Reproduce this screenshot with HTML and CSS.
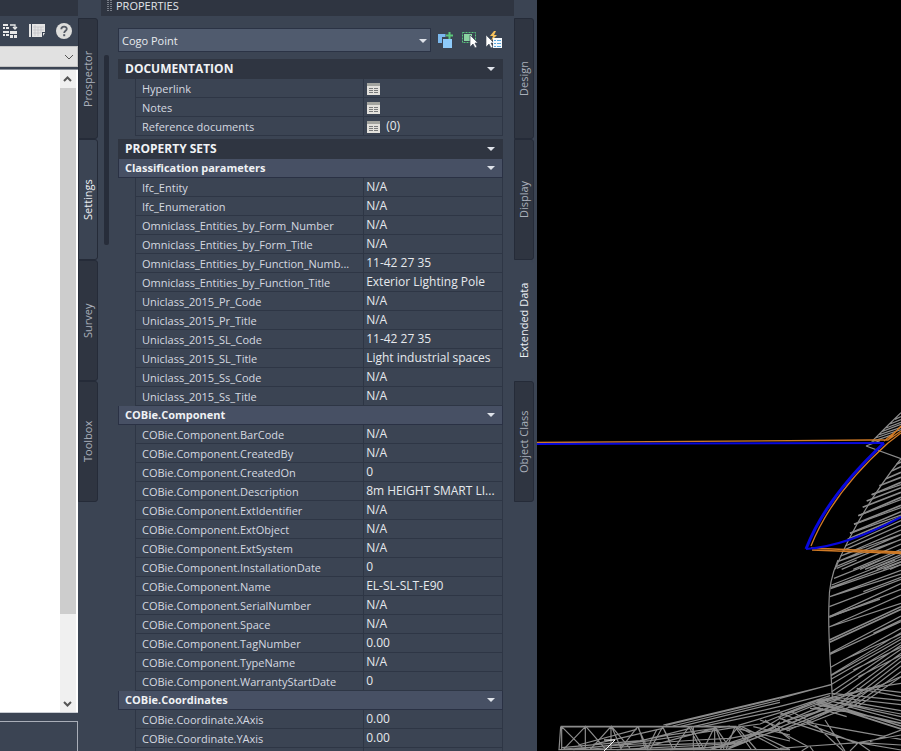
FILE: index.html
```
<!DOCTYPE html>
<html lang="en">
<head>
<meta charset="utf-8">
<title>Properties</title>
<link rel="stylesheet" href="styles.css">
</head>
<body>
<main class="workspace">
  <section class="toolspace" aria-label="Toolspace">
    <div class="titlebar"></div>
    <div class="toolbar">
      <button class="tool" aria-label="Item view"><svg width="16" height="16" viewBox="0 0 16 16"><path fill="#e8e8e8" d="M0 1h5v2H0zM0 4h2v2H0zM3 4h3v2H3zM0 8h6v2H0zM0 11h2v2H0zM3 11h3v2H3zM7 8h7v3H7zM7 12h3v3H7zM11 12h3v3h-3z"/><path d="M7 2h5v4M10 4l2 2 2-2" fill="none" stroke="#e8e8e8" stroke-width="1.3"/></svg></button>
      <button class="tool" aria-label="Panorama"><svg width="18" height="16" viewBox="0 0 18 16"><path fill="#e4e4e4" d="M1 1h2v13H1zM4 1h13v8h-3v5H4zM15 10h2l-2 3z"/><path d="M5 4h11M5 7h11M5 10h8M7 2v11M10 4v9M13 4v6" stroke="#b9bbc0" stroke-width=".6"/></svg></button>
      <button class="tool" aria-label="Help"><svg width="18" height="18" viewBox="0 0 18 18"><circle cx="9" cy="9" r="8" fill="#dededc"/><path d="M6.3 7.2C6.3 3.7 12 3.8 11.8 7c-.1 1.8-2.6 1.9-2.6 4" fill="none" stroke="#555b65" stroke-width="1.8"/><path d="M8.2 12.2h2v2h-2z" fill="#555b65"/></svg></button>
    </div>
    <select class="view-select" aria-label="View"><option></option></select>
    <div class="tree">
      <div class="scrollbar">
        <svg width="15" height="18" viewBox="0 0 15 18"><path d="M4 11l3.500-3.500L11 11" fill="none" stroke="#555" stroke-width="2"/></svg>
        <div class="thumb"></div>
        <svg width="15" height="18" viewBox="0 0 15 18"><path d="M4 8l3.500 3.500L11 8" fill="none" stroke="#555" stroke-width="2"/></svg>
      </div>
    </div>
    <div class="preview"></div>
  </section>
  <nav class="tabs" aria-label="Toolspace tabs">
    <button class="tab">Prospector</button>
    <button class="tab active">Settings</button>
    <button class="tab">Survey</button>
    <button class="tab">Toolbox</button>
  </nav>
  <section class="palette" aria-label="Properties">
    <h1 class="palette-title"><svg width="5" height="12" viewBox="0 0 5 12"><path d="M1 0v12M4 0v12" stroke="#c3c7cf" stroke-dasharray="1 1"/></svg>PROPERTIES</h1>
    <div class="palette-body">
      <div class="palette-scroll"></div>
      <div class="palette-content">
        <div class="object-row">
          <span class="select-wrap">
            <select class="object-select" aria-label="Object type"><option>Cogo Point</option></select>
            <svg class="caret" width="10" height="6" viewBox="0 0 10 6"><path d="M1 1h8L5 5z" fill="#dfe3ea"/></svg>
          </span>
          <button class="tool" aria-label="Add to selection"><svg width="18" height="18" viewBox="0 0 18 18"><path fill="#7ab8ee" d="M1 3h8v3H5v6H1z"/><path fill="#8ecbfa" d="M6 8h9v9H6z"/><path d="M12.500 0v8M8.500 4h8" stroke="#3b4453" stroke-width="4"/><path d="M12.500 1v7M9 4.500h7" stroke="#5bc57a" stroke-width="2"/></svg></button>
          <button class="tool" aria-label="Select objects"><svg width="18" height="18" viewBox="0 0 18 18"><path d="M1.500 1.500h13v10h-13z" fill="none" stroke="#58c47c" stroke-dasharray="2 1"/><path fill="#8bd3a2" d="M3 3h8v7H3z"/><path fill="#fff" stroke="#3b4453" stroke-width=".7" d="M9 4v12l3-3 2 4 2-1-2-4h3z"/></svg></button>
          <button class="tool" aria-label="Quick select"><svg width="18" height="18" viewBox="0 0 18 18"><path fill="#f5c15c" d="M9 0L5 5h3L6 10l6-6H9l2-4z"/><path fill="#fff" stroke="#3b4453" stroke-width=".6" d="M1 4v12l3-3 2 4 2-1-2-4h3z"/><path fill="#f4f8fc" d="M8 7h9v10H8z"/><path d="M9 9.500h2m1 0h4M9 12.500h2m1 0h4M9 15.500h2m1 0h4" stroke="#57a7dc"/></svg></button>
        </div>

        <button class="group-head">DOCUMENTATION<svg width="10" height="6" viewBox="0 0 10 6"><path d="M1 1h8L5 5z" fill="#dfe3ea"/></svg></button>
        <table class="props">
          <tr><th scope="row">Hyperlink</th><td><button class="doc" aria-label="Edit hyperlink"><svg width="13" height="12" viewBox="0 0 13 12"><path fill="#e3e1dc" d="M0 0h13v12H0z"/><path fill="#a3a49f" d="M0 0h13v3H0z"/><path d="M2 5.500h4m1 0h4M2 7.500h4m1 0h4M2 9.500h4m1 0h4" stroke="#77797a"/></svg></button></td></tr>
          <tr><th scope="row">Notes</th><td><button class="doc" aria-label="Edit notes"><svg width="13" height="12" viewBox="0 0 13 12"><path fill="#e3e1dc" d="M0 0h13v12H0z"/><path fill="#a3a49f" d="M0 0h13v3H0z"/><path d="M2 5.500h4m1 0h4M2 7.500h4m1 0h4M2 9.500h4m1 0h4" stroke="#77797a"/></svg></button></td></tr>
          <tr><th scope="row">Reference documents</th><td><button class="doc" aria-label="Edit reference documents"><svg width="13" height="12" viewBox="0 0 13 12"><path fill="#e3e1dc" d="M0 0h13v12H0z"/><path fill="#a3a49f" d="M0 0h13v3H0z"/><path d="M2 5.500h4m1 0h4M2 7.500h4m1 0h4M2 9.500h4m1 0h4" stroke="#77797a"/></svg></button>(0)</td></tr>
        </table>

        <button class="group-head spaced">PROPERTY SETS<svg width="10" height="6" viewBox="0 0 10 6"><path d="M1 1h8L5 5z" fill="#dfe3ea"/></svg></button>
        <button class="set-head">Classification parameters<svg width="10" height="6" viewBox="0 0 10 6"><path d="M1 1h8L5 5z" fill="#dfe3ea"/></svg></button>
        <table class="props">
          <tr><th scope="row">Ifc_Entity</th><td>N/A</td></tr>
          <tr><th scope="row">Ifc_Enumeration</th><td>N/A</td></tr>
          <tr><th scope="row">Omniclass_Entities_by_Form_Number</th><td>N/A</td></tr>
          <tr><th scope="row">Omniclass_Entities_by_Form_Title</th><td>N/A</td></tr>
          <tr><th scope="row">Omniclass_Entities_by_Function_Numb...</th><td>11-42 27 35</td></tr>
          <tr><th scope="row">Omniclass_Entities_by_Function_Title</th><td>Exterior Lighting Pole</td></tr>
          <tr><th scope="row">Uniclass_2015_Pr_Code</th><td>N/A</td></tr>
          <tr><th scope="row">Uniclass_2015_Pr_Title</th><td>N/A</td></tr>
          <tr><th scope="row">Uniclass_2015_SL_Code</th><td>11-42 27 35</td></tr>
          <tr><th scope="row">Uniclass_2015_SL_Title</th><td>Light industrial spaces</td></tr>
          <tr><th scope="row">Uniclass_2015_Ss_Code</th><td>N/A</td></tr>
          <tr><th scope="row">Uniclass_2015_Ss_Title</th><td>N/A</td></tr>
        </table>
        <button class="set-head">COBie.Component<svg width="10" height="6" viewBox="0 0 10 6"><path d="M1 1h8L5 5z" fill="#dfe3ea"/></svg></button>
        <table class="props">
          <tr><th scope="row">COBie.Component.BarCode</th><td>N/A</td></tr>
          <tr><th scope="row">COBie.Component.CreatedBy</th><td>N/A</td></tr>
          <tr><th scope="row">COBie.Component.CreatedOn</th><td>0</td></tr>
          <tr><th scope="row">COBie.Component.Description</th><td>8m HEIGHT SMART LI...</td></tr>
          <tr><th scope="row">COBie.Component.ExtIdentifier</th><td>N/A</td></tr>
          <tr><th scope="row">COBie.Component.ExtObject</th><td>N/A</td></tr>
          <tr><th scope="row">COBie.Component.ExtSystem</th><td>N/A</td></tr>
          <tr><th scope="row">COBie.Component.InstallationDate</th><td>0</td></tr>
          <tr><th scope="row">COBie.Component.Name</th><td>EL-SL-SLT-E90</td></tr>
          <tr><th scope="row">COBie.Component.SerialNumber</th><td>N/A</td></tr>
          <tr><th scope="row">COBie.Component.Space</th><td>N/A</td></tr>
          <tr><th scope="row">COBie.Component.TagNumber</th><td>0.00</td></tr>
          <tr><th scope="row">COBie.Component.TypeName</th><td>N/A</td></tr>
          <tr><th scope="row">COBie.Component.WarrantyStartDate</th><td>0</td></tr>
        </table>
        <button class="set-head">COBie.Coordinates<svg width="10" height="6" viewBox="0 0 10 6"><path d="M1 1h8L5 5z" fill="#dfe3ea"/></svg></button>
        <table class="props">
          <tr><th scope="row">COBie.Coordinate.XAxis</th><td>0.00</td></tr>
          <tr><th scope="row">COBie.Coordinate.YAxis</th><td>0.00</td></tr>
          <tr><th></th><td></td></tr>
        </table>
      </div>
    </div>
  </section>
  <nav class="tabs tabs-right" aria-label="Property tabs">
    <button class="tab">Design</button>
    <button class="tab">Display</button>
    <button class="tab active">Extended Data</button>
    <button class="tab">Object Class</button>
  </nav>
  <section class="drawing" aria-label="Drawing">
    <svg class="model" viewBox="537 0 364 751" preserveAspectRatio="xMinYMin slice">
      <g fill="none" stroke="#8c8c8c">
        <!-- upper surface -->
        <g transform="translate(780 400) scale(.33333)" stroke-width="3.6">
          <path d="M363 38L325 75 275 125M258 138L363 176M258 138L300 122M345 58l18-8M330 72l33-13M318 84l45-17M305 95l58-22M298 104l65-22M286 114l77-25M278 124l60-20"/>
          <path d="M363 176Q240 330 165 508"/>
          <path stroke-width="5" d="M350 192l13-6M336 212l27-12M318 236l45-19M298 257l65-25M275 284l88-37M260 303l103-40M248 322l115-45M235 347l128-55M222 373l141-57M210 400l153-65M203 418l160-68"/>
          <path d="M275 284l88-30M235 347l128-48M222 373l141-50M210 400l153-55M196 438l167-76M188 452l175-77M182 468l181-78M175 484l188-80M168 500l195-82M185 508l178-76M220 508l143-60M240 508l123-55M255 508l108-44M270 508l93-38M290 508l73-31M310 508l53-22M330 508l33-14M182 468l181-65M175 484l188-65"/>
        </g>
        <!-- lower surface -->
        <g transform="translate(780 560) scale(.33333)" stroke-width="3.6">
          <path d="M174 0Q146 65 147 130C143 230 152 310 157 412"/>
          <path d="M170 25L230 0M162 55L300 0M155 75L345 0M153 82L363 5M152 86L363 14M150 110L363 31M150 110L363 42M148 140L363 58M148 170L363 71M148 172L363 88M147 201L363 105M147 201L363 130"/>
          <path stroke-width="5" d="M148 240L363 140M149 247L363 148M148 170L300 117"/>
          <path d="M150 280L363 168M150 283L363 185M152 322L363 205M153 345L363 218M153 347L363 230M153 358L363 238M155 373L363 248M155 395L363 256M160 405L363 268M180 415L363 280M185 425L363 292M200 430L363 304M215 430L363 318M225 435L363 335M235 438L363 350M190 300L363 222M220 330L363 262M235 350L363 286M280 220L363 180M250 95L363 52"/>
          <path d="M155 373L0 415M155 374L0 412M152 400L0 439M150 407L0 457M145 414L0 470M160 413L0 477M180 415L0 491M190 425L0 502M210 425L0 512M230 433L80 492 0 512M240 420L90 475M155 413L0 465M270 385L80 430M300 375L140 425M363 350L175 430"/>
          <path stroke-width="5" d="M110 420L363 498M115 427L363 507M110 433L363 490"/>
          <path d="M155 400L363 421M157 411L363 434M150 415L363 452M155 424L363 470M230 385L363 410M265 385L363 397M235 390L363 370M0 458L60 483 150 500 363 538M0 475L120 515 235 548 363 570M35 455L100 490 190 573M80 490L230 550M135 480L195 573M0 515L85 560M20 513L70 490M0 565L90 558 235 548 363 525M85 560L65 573M90 560L100 573M235 548L210 573M235 548L270 573M245 548L363 555M270 545L363 510M180 428L363 462M205 440L363 482M90 445L200 455M100 440L200 470"/>
          <path d="M15 460L105 425M10 485L145 445M35 490L130 445M60 495L170 445"/>
        </g>
        <!-- boundary mesh -->
        <g transform="translate(530 680) scale(.33333)" stroke-width="3.6">
          <path stroke-width="5" d="M92 140H620"/>
          <path d="M85 209H780M92 140l-5 70M95 140v70M95 140l62 62M100 209l66-69v70M168 140l60 69M180 209l63-69v70M245 140l30 70M245 140l55 65M270 209l53-69M323 140l32 70M325 140l22 70M360 209l38-69M398 140l32 70M398 140l20 40M430 209l47-69M477 140l36 70M482 140l42 70M490 140v70M520 209l34-69v70M555 140l28 70M555 140l35 50M588 209l27-69M615 140l50 70M620 140l60 70M625 140l130 70M350 209l30-60M570 209l55-69"/>
          <path d="M400 135L750 52M407 136L750 54M428 138L750 60M452 139L750 67M490 140L750 79M515 140L750 91M625 136L750 98M630 140L690 132 750 108"/>
          <path d="M95 203L330 182 410 166 600 138M130 209L360 182 470 165 630 140M180 207L350 196 600 188 720 150 750 125M260 209L590 192 730 145 750 130M350 209L600 200 735 153 750 139M420 209L610 200 750 146M490 209L620 190 750 132M540 209L640 180 750 115M590 209L700 165 750 150M100 207L500 180 600 175 750 146M145 195L320 148M190 193L398 145M270 198L480 145M320 208L555 145"/>
          <path d="M620 145L780 183M635 140L780 209M670 140L780 165M690 120L780 153M705 120L780 178M745 110L780 130M640 170L720 148"/>
        </g>
      </g>
      <path d="M604 740h11l-11 11" fill="none" stroke="#fff"/>
      <g fill="none" stroke="#d07a26" stroke-width="1.300">
        <path d="M537 442.500L872 440 888 440 901 426M884 441L901 427M888 440L901 431M901 433L888 443Q832 493 811 546M811 548L901 552M812 550L901 553.500"/>
      </g>
      <g fill="none" stroke="#0808dc">
        <path stroke-width="2" d="M537 444L884 443"/>
        <path stroke-width="3" d="M884 443Q826 497 806 549"/>
        <path stroke-width="2" d="M806 549Q847 546 901 517"/>
      </g>
    </svg>
  </section>
</main>
</body>
</html>
```
FILE: styles.css
```
* { box-sizing: border-box; }

body {
  margin: 0;
  font-family: "Open Sans", "Noto Sans", sans-serif;
  font-size: 12px;
  color: #d5d9e0;
  background: #3b4453;
}

button {
  font: inherit;
  color: inherit;
  background: none;
  border: 0;
  padding: 0;
}

svg { display: block; flex: none; }

.workspace {
  display: flex;
  height: 100vh;
  overflow: hidden;
}

/* Toolspace */
.toolspace {
  display: flex;
  flex-direction: column;
  flex: 0 0 78px;
}

.titlebar {
  height: 16px;
  background: #2f3541;
}

.toolbar {
  display: flex;
  align-items: center;
  justify-content: space-between;
  height: 30px;
  padding: 0 5px 0 3px;
}

.view-select {
  appearance: none;
  height: 21px;
  border: 1px solid #c4c4c4;
  border-left: 0;
  border-radius: 0;
  background: url("data:image/svg+xml,%3Csvg xmlns='http://www.w3.org/2000/svg' width='10' height='6'%3E%3Cpath d='M1 1l4 4 4-4' fill='none' stroke='%23555'/%3E%3C/svg%3E") no-repeat right 3px center #e1e1e1;
}

.tree {
  display: flex;
  flex: 1;
  justify-content: flex-end;
  margin-top: 2px;
  padding-right: 2px;
  background: #fff;
  border-top: 1px solid #8c929c;
  border-bottom: 1px solid #c8ccd2;
}

.scrollbar {
  display: flex;
  flex-direction: column;
  width: 16px;
  background: #f0f0f0;
}

.thumb {
  flex: 0 1 82%;
  background: #cdcdcd;
}

.scrollbar svg:last-child { margin-top: auto; }

.preview {
  height: 30px;
  margin-top: 8px;
  border: solid #a9aeb8;
  border-width: 1px 1px 0 0;
}

/* Vertical tabs */
.tabs {
  display: flex;
  flex-direction: column;
  flex: none;
  padding: 18px 3px 0 0;
}

.tab {
  width: 20px;
  height: 121px;
  writing-mode: vertical-rl;
  transform: rotate(180deg);
  text-align: center;
  font-size: 11px;
  line-height: 16px;
  color: #a9afba;
  background: #2f3541;
  border: 1px solid #252b38;
  border-radius: 3px 0 0 3px;
}

.tab.active {
  color: #eceff3;
  background: #3b4453;
}

.tabs-right .tab.active { border-color: #3b4453; }

/* Properties palette */
.palette {
  display: flex;
  flex-direction: column;
  flex: 0 0 413px;
  overflow: hidden;
}

.palette-title {
  display: flex;
  align-items: flex-start;
  gap: 4px;
  flex: none;
  height: 16px;
  margin: 0;
  padding-left: 6px;
  font-size: 11px;
  font-weight: 400;
  line-height: 11px;
  color: #e2e5ea;
  background: #2f3541;
}

.palette-body {
  display: flex;
  gap: 9px;
  padding: 12px 11px 0 3px;
}

.palette-scroll {
  width: 5px;
  height: 190px;
  margin-top: 27px;
  border-radius: 2px;
  background: #272d3a;
}

.palette-content { flex: 1; min-width: 0; }

.object-row {
  display: flex;
  align-items: center;
  gap: 6px;
  height: 24px;
  margin-bottom: 7px;
}

.select-wrap {
  position: relative;
  flex: 1;
}

.object-select {
  appearance: none;
  display: block;
  width: 100%;
  height: 24px;
  padding: 0 3px;
  font: inherit;
  font-size: 11px;
  color: #e8ebef;
  background: #505b6e;
  border: 1px solid #2b3345;
  border-radius: 0;
}

.caret {
  position: absolute;
  right: 3px;
  top: 10px;
}

.group-head,
.set-head {
  display: flex;
  align-items: center;
  justify-content: space-between;
  width: 100%;
  padding: 0 7px 1px;
  font-weight: 700;
  color: #f0f2f5;
}

.group-head {
  height: 20px;
  background: #2f3541;
}

.group-head.spaced { margin-top: 3px; }

.set-head {
  height: 19px;
  padding: 0 6px 1px;
  font-size: 11px;
  background: #475064;
  border: solid #2a3144;
  border-width: 0 1px 1px;
}

.props {
  width: calc(100% - 17px);
  margin-left: 17px;
  table-layout: fixed;
  border-spacing: 0;
}

.props th,
.props td {
  height: 19px;
  padding: 0 0 0 2px;
  line-height: 16px;
  font-weight: 400;
  text-align: left;
  white-space: nowrap;
  border: solid #2e3645;
  border-width: 0 0 1px 1px;
}

.props th {
  width: 62%;
  padding: 2px 0 0 6px;
  font-size: 11px;
}

.props td {
  color: #e6e9ed;
  border-right-width: 1px;
}

.doc {
  display: inline-block;
  margin: 0 6px 0 1px;
  vertical-align: middle;
}

/* Model view */
.drawing {
  flex: 1;
  min-width: 0;
  background: #000;
}

.model {
  width: 100%;
  height: 100%;
}
```
